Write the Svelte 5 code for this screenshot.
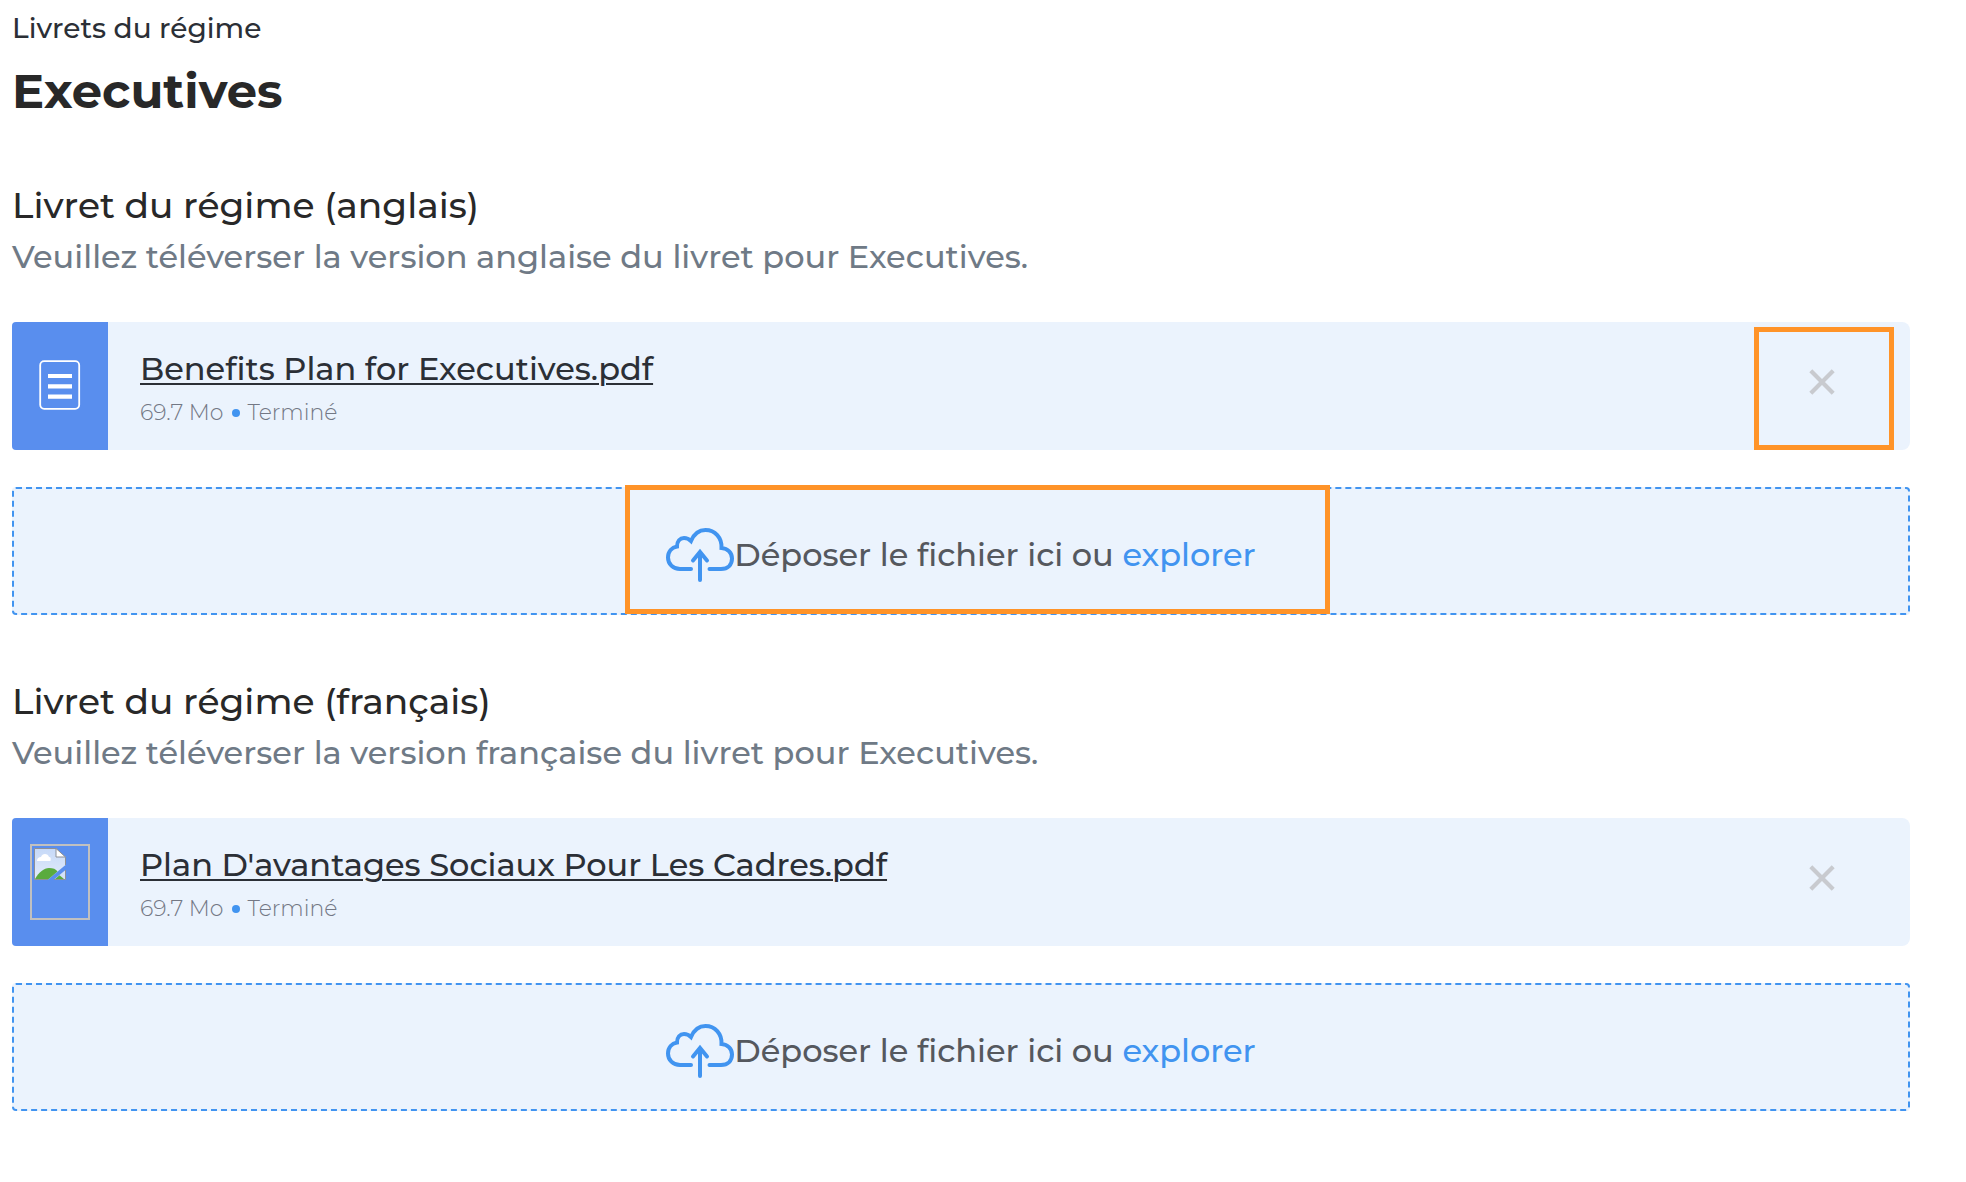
<script>
  const booklets = [
    {
      id: 'en',
      title: 'Livret du régime (anglais)',
      hint: 'Veuillez téléverser la version anglaise du livret pour Executives.',
      file: 'Benefits Plan for Executives.pdf',
      size: '69.7 Mo',
      status: 'Terminé',
      thumb: 'document',
      highlighted: true
    },
    {
      id: 'fr',
      title: 'Livret du régime (français)',
      hint: 'Veuillez téléverser la version française du livret pour Executives.',
      file: "Plan D'avantages Sociaux Pour Les Cadres.pdf",
      size: '69.7 Mo',
      status: 'Terminé',
      thumb: 'missing',
      highlighted: false
    }
  ];
</script>

<main class="page">
  <header>
    <p class="eyebrow">Livrets du régime</p>
    <h1>Executives</h1>
  </header>

  {#each booklets as b (b.id)}
    <section aria-labelledby={`title-${b.id}`}>
      <h2 id={`title-${b.id}`}>{b.title}</h2>
      <p class="hint">{b.hint}</p>

      <div class="file">
        <div class="thumb">
          {#if b.thumb === 'document'}
            <svg width="42" height="52" viewBox="0 0 42 52" fill="none" stroke="#fff" aria-hidden="true">
              <rect x="1.2" y="1.2" width="39" height="47.6" rx="4" stroke-width="1.8" />
              <path d="M9 16h24M9 26.3h24M9 36.6h24" stroke-width="4.2" />
            </svg>
          {:else}
            <div class="broken">
              <svg width="32" height="32" viewBox="0 0 32 32" aria-hidden="true">
                <defs>
                  <linearGradient id="sky" x1="0" y1="0" x2="0" y2="1">
                    <stop offset="0" stop-color="#c6d9f8" />
                    <stop offset="1" stop-color="#e3ecfa" />
                  </linearGradient>
                </defs>
                <path d="M.5.5H22L31.500 9.500V17L14 31.500H.5Z" fill="url(#sky)" />
                <path d="M3 13c0-3 2-4 4-4 1-4 7-4 8 0 2 0 2 2 1.500 4Z" fill="#fff" />
                <path d="M1 31C5 24 10 20 15 20c4 0 7 1 8.500 3.500L14 31.500Z" fill="#5aab3e" />
                <path d="M31.500 22v9.500H20Z" fill="#d3e1f8" />
                <path d="M20.500 31.500 25.500 27.300 30.500 31.500Z" fill="#5aab3e" />
                <path d="M14 31.500H.5V.5H22L31.500 9.500V17M31.500 22v9.500H20" fill="none" stroke="#8d9097" />
                <path d="M22 .5V9h9.500Z" fill="#fff" stroke="#8d9097" />
              </svg>
            </div>
          {/if}
        </div>
        <div class="info">
          <a href="#{b.id}">{b.file}</a>
          <p class="meta"><span>{b.size}</span><i class="dot"></i><span>{b.status}</span></p>
        </div>
        <button class="remove" type="button" aria-label="Supprimer le fichier">
          <svg width="26" height="26" viewBox="0 0 26 26" fill="none" stroke="#c8cacf" stroke-width="4.2" aria-hidden="true">
            <path d="M1.800 1.800 24.200 24.200M24.200 1.800 1.800 24.200" />
          </svg>
        </button>
        {#if b.highlighted}<span class="mark mark-remove"></span>{/if}
      </div>

      <div class="drop">
        <svg width="68" height="54" viewBox="0 0 68 54" fill="none" stroke="#4194f0" stroke-width="4" stroke-linecap="round" aria-hidden="true">
          <path d="M25 41H14C7 41 2 36 2 29.500 2 23.500 6 19.500 11 18.500 11 13 14 10 18 10 21 10 23 11 25 13 28 6 33 2 39.500 2 49 2 56 9.500 55.500 20 62 20.500 66 25 66 30.500 66 36.500 62 41 55 41H43.500" />
          <path d="M34 52V24M27 32.500 34 24 41 32.500" />
        </svg>
        <p>Déposer le fichier ici ou <button class="browse" type="button">explorer</button></p>
        {#if b.highlighted}<span class="mark mark-drop"></span>{/if}
      </div>
    </section>
  {/each}
</main>

<style>
  :global(body) {
    margin: 0;
    background: #fff;
  }
  .page {
    padding: 10px 56px 60px 12px;
    font-family: Montserrat, Inter, 'Liberation Sans', sans-serif;
    font-weight: 500;
    color: #282828;
  }
  h1,
  h2,
  p {
    margin: 0;
  }
  .eyebrow {
    font-size: 28px;
    line-height: 36px;
    color: #2b2f36;
  }
  h1 {
    margin-top: 17px;
    font-size: 48px;
    line-height: 56px;
    font-weight: 700;
  }
  section {
    padding-top: 62px;
  }
  h2 {
    font-size: 36px;
    line-height: 48px;
    font-weight: 500;
  }
  .hint {
    margin: 8px 0 45px;
    font-size: 32px;
    line-height: 40px;
    color: #6f7a86;
  }
  .file {
    position: relative;
    display: flex;
    align-items: center;
    min-height: 128px;
    border-radius: 4px 8px 8px 4px;
    background: #ebf3fd;
    overflow: hidden;
  }
  .thumb {
    align-self: stretch;
    flex: none;
    display: grid;
    place-items: center;
    width: 96px;
    background: #598eee;
  }
  .thumb svg,
  .remove svg {
    display: block;
  }
  .broken {
    box-sizing: border-box;
    width: 60px;
    height: 76px;
    padding: 2px;
    border: 2px solid #c0c0c0;
  }
  .info {
    flex: 1;
    padding: 4px 0 0 32px;
  }
  .info a {
    display: block;
    font-size: 32px;
    line-height: 40px;
    color: #2b2f36;
    text-decoration: underline;
    text-decoration-thickness: 2px;
    text-underline-offset: 3px;
  }
  .meta {
    display: flex;
    align-items: center;
    gap: 8px;
    margin-top: 10px;
    font-size: 22px;
    line-height: 28px;
    font-weight: 300;
    color: #737885;
  }
  .dot {
    width: 8px;
    height: 8px;
    border-radius: 50%;
    background: #4194f0;
  }
  button {
    padding: 0;
    border: 0;
    background: none;
    font: inherit;
    cursor: pointer;
  }
  .remove {
    margin-right: 68px;
    padding: 7px 7px 15px;
  }
  .drop {
    position: relative;
    box-sizing: border-box;
    display: flex;
    align-items: center;
    justify-content: center;
    min-height: 128px;
    margin-top: 37px;
    padding-top: 8px;
    border: 2px dashed #4194f0;
    border-radius: 4px;
    background: #ebf3fd;
    font-size: 32px;
    line-height: 40px;
    color: #55585e;
  }
  .browse {
    color: #4194f0;
  }
  .mark {
    position: absolute;
    box-sizing: border-box;
    border: 5px solid #ff9328;
    pointer-events: none;
  }
  .mark-remove {
    top: 5px;
    right: 16px;
    bottom: 0;
    width: 140px;
  }
  .mark-drop {
    top: -4px;
    bottom: -1px;
    left: calc(50% - 336px);
    width: 705px;
  }
</style>
